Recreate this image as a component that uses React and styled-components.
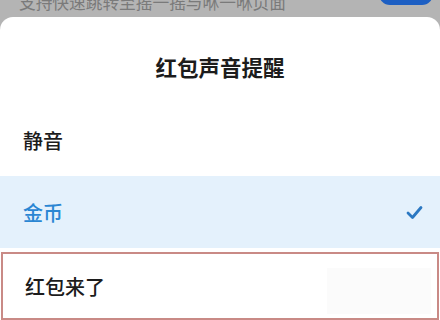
import styled, { createGlobalStyle } from "styled-components";

const GlobalStyle = createGlobalStyle`
  html, body {
    margin: 0;
    padding: 0;
    background: #b4b4b4;
    font-family: "Noto Sans CJK SC", "Noto Sans", sans-serif;
  }
`;

const Screen = styled.div`
  width: 440px;
  height: 320px;
  overflow: hidden;
  display: flex;
  flex-direction: column;
  background: #b4b4b4;
`;

const Backdrop = styled.div`
  height: 17px;
  flex-shrink: 0;
  display: flex;
  justify-content: space-between;
  align-items: flex-end;
  overflow: hidden;
  padding: 0 7px 0 19px;
`;

const Hint = styled.div`
  font-size: 16.7px;
  line-height: 20px;
  color: #7a7a7a;
  margin-bottom: 5px;
  white-space: nowrap;
`;

const PillButton = styled.div`
  width: 54px;
  height: 22px;
  align-self: flex-start;
  margin-top: -17px;
  border-radius: 11px;
  background: #1d5fc3;
`;

const Sheet = styled.div`
  flex: 1;
  background: #fff;
  border-radius: 13px 13px 0 0;
  display: flex;
  flex-direction: column;
`;

const Title = styled.div`
  height: 87px;
  flex-shrink: 0;
  display: flex;
  align-items: center;
  justify-content: center;
  padding-top: 12px;
  box-sizing: border-box;
  font-size: 21.5px;
  font-weight: 700;
  color: #1c1c1c;
`;

const Option = styled.div`
  height: 72px;
  flex-shrink: 0;
  display: flex;
  align-items: center;
  justify-content: space-between;
  padding: 0 17px 0 23px;
  box-sizing: border-box;
  font-size: 20px;
  font-weight: 500;
  color: ${(p) => (p.$active ? "#2a86d3" : "#1c1c1c")};
  background: ${(p) => (p.$active ? "#e4f1fc" : "#fff")};
`;

const MarkedOption = styled(Option)`
  height: 68px;
  margin: 4px 1px 0 1px;
  padding-left: 22px;
  border: 2px solid #c98a86;
  position: relative;
`;

const Smudge = styled.div`
  position: absolute;
  right: 6px;
  top: 14px;
  width: 104px;
  height: 46px;
  background: #fbfbfb;
`;

const Check = () => (
  <svg width="17" height="15" viewBox="0 0 17 15" fill="none">
    <path
      d="M2 8 L6.5 12.5 L15 2.5"
      stroke="#2b78c2"
      strokeWidth="2.8"
      strokeLinecap="round"
      strokeLinejoin="round"
    />
  </svg>
);

export default function App() {
  return (
    <Screen>
      <GlobalStyle />
      <Backdrop>
        <Hint>支持快速跳转至摇一摇与咻一咻页面</Hint>
        <PillButton />
      </Backdrop>
      <Sheet>
        <Title>红包声音提醒</Title>
        <Option>静音</Option>
        <Option $active>
          金币
          <Check />
        </Option>
        <MarkedOption>
          红包来了
          <Smudge />
        </MarkedOption>
      </Sheet>
    </Screen>
  );
}
